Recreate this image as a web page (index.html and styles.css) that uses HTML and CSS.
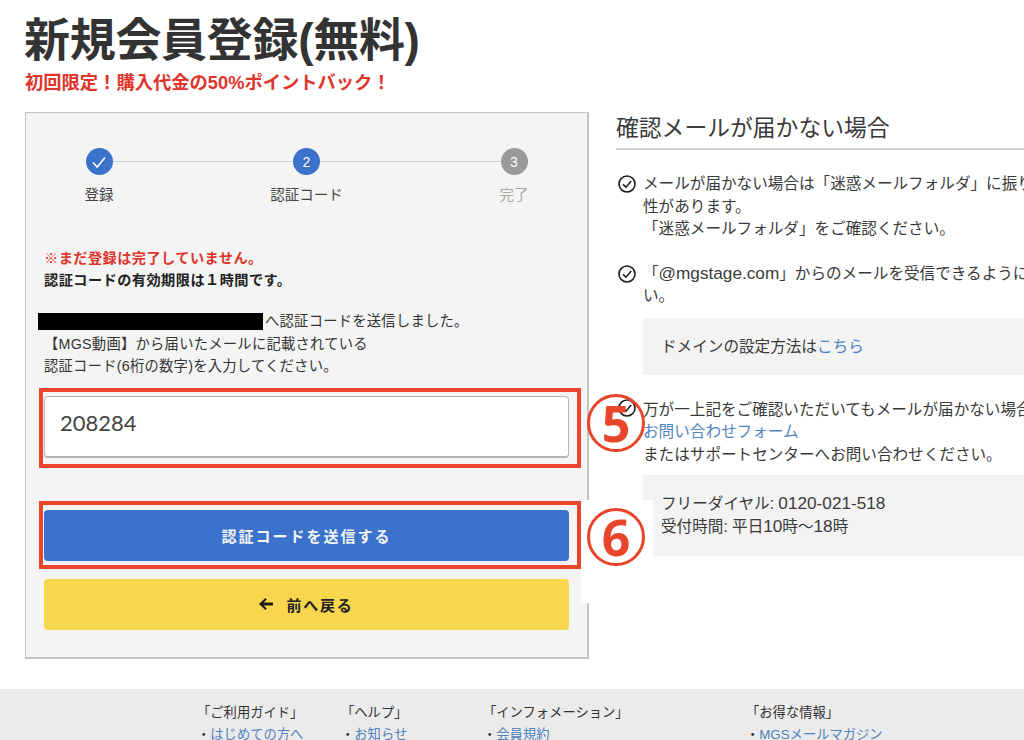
FILE: index.html
```html
<!DOCTYPE html>
<html lang="ja">
<head>
    <meta charset="UTF-8">
    <meta name="viewport" content="width=device-width, initial-scale=1.0">
    <title>新規会員登録(無料)</title>
    <link rel="stylesheet" href="styles.css">
</head>
<body>
    <header class="page-head">
        <h1>新規会員登録(無料)</h1>
        <p class="campaign">初回限定！購入代金の50%ポイントバック！</p>
    </header>

    <main class="columns">
        <section class="panel">
            <ol class="steps">
                <li class="step done">
                    <span class="step-dot">
                        <svg width="16" height="16" viewBox="0 0 16 16"><path d="M2 8.5 6.2 13 14 3.5" fill="none" stroke="#fff" stroke-width="1.6"/></svg>
                    </span>
                    <span class="step-label">登録</span>
                </li>
                <li class="step current">
                    <span class="step-dot">2</span>
                    <span class="step-label">認証コード</span>
                </li>
                <li class="step todo">
                    <span class="step-dot">3</span>
                    <span class="step-label">完了</span>
                </li>
            </ol>

            <p class="notice"><strong class="warn">※まだ登録は完了していません。</strong><br><strong>認証コードの有効期限は１時間です。</strong></p>

            <p class="sent"><span class="redacted"></span>へ認証コードを送信しました。<br>【MGS動画】から届いたメールに記載されている<br>認証コード(6桁の数字)を入力してください。</p>

            <input class="code-input" type="text" value="208284">
            <button class="btn btn-send">認証コードを送信する</button>
            <button class="btn btn-back">
                <svg width="14" height="12" viewBox="0 0 14 12"><path d="M6.4 0 7.8 1.4 4.6 4.5H14v3H4.6l3.2 3.1L6.4 12 0 6z" fill="#1d1d1d"/></svg>
                前へ戻る
            </button>
        </section>

        <aside class="side">
            <h2>確認メールが届かない場合</h2>

            <div class="check-item">
                <svg class="check" width="18" height="18" viewBox="0 0 18 18"><circle cx="9" cy="9" r="8" fill="none" stroke="#1d1d1d" stroke-width="1.6"/><path d="M5 9.3 8 12.2 13.2 6" fill="none" stroke="#1d1d1d" stroke-width="1.6"/></svg>
                <p>メールが届かない場合は「迷惑メールフォルダ」に振り分けられている可能<br>性があります。<br>「迷惑メールフォルダ」をご確認ください。</p>
            </div>

            <div class="check-item">
                <svg class="check" width="18" height="18" viewBox="0 0 18 18"><circle cx="9" cy="9" r="8" fill="none" stroke="#1d1d1d" stroke-width="1.6"/><path d="M5 9.3 8 12.2 13.2 6" fill="none" stroke="#1d1d1d" stroke-width="1.6"/></svg>
                <p>「<span class="latin">@mgstage.com</span>」からのメールを受信できるように設定してくださ<br>い。</p>
            </div>
            <div class="info-box domain">ドメインの設定方法は<a href="#">こちら</a></div>

            <div class="check-item last">
                <svg class="check" width="18" height="18" viewBox="0 0 18 18"><circle cx="9" cy="9" r="8" fill="none" stroke="#1d1d1d" stroke-width="1.6"/><path d="M5 9.3 8 12.2 13.2 6" fill="none" stroke="#1d1d1d" stroke-width="1.6"/></svg>
                <p>万が一上記をご確認いただいてもメールが届かない場合は<br><a href="#">お問い合わせフォーム</a><br>またはサポートセンターへお問い合わせください。</p>
            </div>
            <div class="info-box phone">フリーダイヤル: <span class="latin">0120-021-518</span><br>受付時間: 平日<span class="latin">10</span>時〜<span class="latin">18</span>時</div>
        </aside>
    </main>

    <footer class="site-foot">
        <div class="foot-col guide">
            <p>「ご利用ガイド」</p>
            <a href="#"><i>・</i>はじめての方へ</a>
        </div>
        <div class="foot-col help">
            <p>「ヘルプ」</p>
            <a href="#"><i>・</i>お知らせ</a>
        </div>
        <div class="foot-col info">
            <p>「インフォメーション」</p>
            <a href="#"><i>・</i>会員規約</a>
        </div>
        <div class="foot-col deals">
            <p>「お得な情報」</p>
            <a href="#"><i>・</i>MGSメールマガジン</a>
        </div>
    </footer>

    <!-- annotations pasted on top of the screenshot -->
    <div class="patch patch-wide"></div>
    <div class="patch patch-narrow"></div>
    <div class="mark mark-input"></div>
    <div class="mark mark-send"></div>
    <div class="num num-5">5</div>
    <div class="num num-6">6</div>
</body>
</html>
```

FILE: styles.css
```css
html, body {
    margin: 0;
    padding: 0;
    width: 1024px;
    height: 740px;
    overflow: hidden;
    background: #fff;
    color: #333;
    font-family: "Liberation Sans", "Noto Sans CJK JP", sans-serif;
}
body {
    position: relative;
}
p, h1, h2, ol {
    margin: 0;
    padding: 0;
}
a {
    color: #4f83bd;
    text-decoration: none;
}

.page-head {
    height: 112px;
    padding-left: 24px;
    box-sizing: border-box;
}
h1 {
    font-size: 46px;
    line-height: 52px;
    padding-top: 14px;
    font-weight: 700;
    color: #333;
    letter-spacing: -0.3px;
}
.campaign {
    margin: 4px 0 0 1px;
    font-size: 18.3px;
    line-height: 26px;
    font-weight: 700;
    color: #e0352b;
}

.columns {
    display: flex;
    align-items: flex-start;
    padding-left: 25px;
}
.panel {
    flex: none;
    width: 564px;
    height: 547px;
    box-sizing: border-box;
    padding: 35px 18px 0;
    background: #f4f4f4;
    border: 1px solid #c4c4c4;
    border-width: 1px 2px 2px 1px;
}

.steps {
    list-style: none;
    display: flex;
    justify-content: space-between;
    width: 495px;
    margin-left: 15px;
    position: relative;
}
.steps::before {
    content: "";
    position: absolute;
    left: 40px;
    right: 40px;
    top: 13px;
    height: 1px;
    background: #d0d0d0;
}
.step {
    position: relative;
    width: 80px;
    display: flex;
    flex-direction: column;
    align-items: center;
}
.step-dot {
    width: 27px;
    height: 27px;
    border-radius: 50%;
    display: flex;
    align-items: center;
    justify-content: center;
    color: #fff;
    font-size: 14px;
    background: #3a72cc;
}
.step.todo .step-dot {
    background: #9a9a9a;
}
.step-label {
    margin-top: 10px;
    font-size: 14.5px;
    line-height: 20px;
    white-space: nowrap;
    color: #444;
}
.step.todo .step-label {
    color: #a9a9a9;
}

.notice {
    margin-top: 42px;
    font-size: 14.2px;
    line-height: 22px;
    letter-spacing: 0.45px;
    color: #222;
}
.warn {
    color: #e0352b;
}
.sent {
    margin-top: 19px;
    font-size: 14.3px;
    line-height: 22.5px;
    letter-spacing: 0.25px;
    color: #333;
    white-space: nowrap;
}
.redacted {
    display: inline-block;
    width: 225px;
    height: 17px;
    margin-left: -6px;
    margin-right: 2px;
    background: #000;
    vertical-align: -4px;
}

.code-input {
    display: block;
    width: 525px;
    height: 62px;
    box-sizing: border-box;
    margin-top: 18px;
    padding: 0 15px 8px;
    border: 1px solid #b5b5b5;
    border-bottom-width: 2px;
    border-radius: 4px;
    background: #fff;
    color: #444;
    font-family: Lato, "Noto Sans", sans-serif;
    font-size: 22px;
    outline: none;
}
.btn {
    display: flex;
    align-items: center;
    justify-content: center;
    width: 525px;
    height: 51px;
    border: none;
    border-radius: 4px;
    font-family: inherit;
    font-size: 15px;
    font-weight: 700;
}
.btn-send {
    margin-top: 52px;
    background: #3a72cc;
    color: #f4f4f4;
    letter-spacing: 2px;
}
.btn-back {
    margin-top: 18px;
    background: #f8d64e;
    color: #222;
    gap: 13px;
    letter-spacing: 1.8px;
}

.side {
    flex: none;
    width: 600px;
    margin-left: 27px;
    white-space: nowrap;
    font-size: 15.6px;
    line-height: 22.5px;
    color: #3a3a3a;
}
.latin {
    font-size: 17.2px;
    line-height: 1;
}
h2 {
    font-size: 22.8px;
    font-weight: 400;
    line-height: 33px;
    height: 36px;
    border-bottom: 2px solid #cfcfcf;
    color: #3a3a3a;
}
.check-item {
    display: flex;
    gap: 7px;
    margin-top: 22px;
    padding-left: 2px;
}
.check-item:first-of-type {
    margin-top: 23px;
}
.check-item.last {
    margin-top: 24px;
}
.check {
    flex: none;
    margin-top: 2px;
}
.check-item.last .check {
    margin-top: 0;
}
.info-box {
    margin: 10px 0 0 27px;
    background: #f3f3f3;
    padding-left: 18px;
}
.info-box.domain {
    padding-top: 18px;
    height: 39px;
}
.info-box.phone {
    margin-top: 9px;
    padding-top: 18px;
    height: 63px;
}

.site-foot {
    position: absolute;
    left: 0;
    right: 0;
    top: 689px;
    height: 51px;
    display: flex;
    padding-left: 197px;
    background: #ebebeb;
    font-size: 13.3px;
    line-height: 22px;
    color: #333;
}
.foot-col {
    padding-top: 13px;
    white-space: nowrap;
}
.foot-col a {
    display: block;
}
.foot-col i {
    font-style: normal;
    color: #333;
}
.guide { width: 144px; }
.help { width: 142px; }
.info { width: 263px; }

.patch {
    position: absolute;
    background: #fff;
}
.patch-wide {
    left: 581px;
    top: 500px;
    width: 72px;
    height: 66px;
}
.patch-narrow {
    left: 581px;
    top: 566px;
    width: 10px;
    height: 37px;
}
.mark {
    position: absolute;
    left: 39px;
    width: 542px;
    box-sizing: border-box;
    border: 4px solid #e8452a;
}
.mark-input {
    top: 388px;
    height: 80px;
}
.mark-send {
    top: 501px;
    height: 68px;
}
.num {
    position: absolute;
    left: 587px;
    width: 58px;
    height: 58px;
    box-sizing: border-box;
    border: 3px solid #e8452a;
    border-radius: 50%;
    display: flex;
    align-items: center;
    justify-content: center;
    color: #e8452a;
    font-family: "Noto Sans", sans-serif;
    font-size: 50px;
    font-weight: 700;
    line-height: 1;
}
.num-5 { top: 394px; }
.num-6 { top: 508px; }
```
